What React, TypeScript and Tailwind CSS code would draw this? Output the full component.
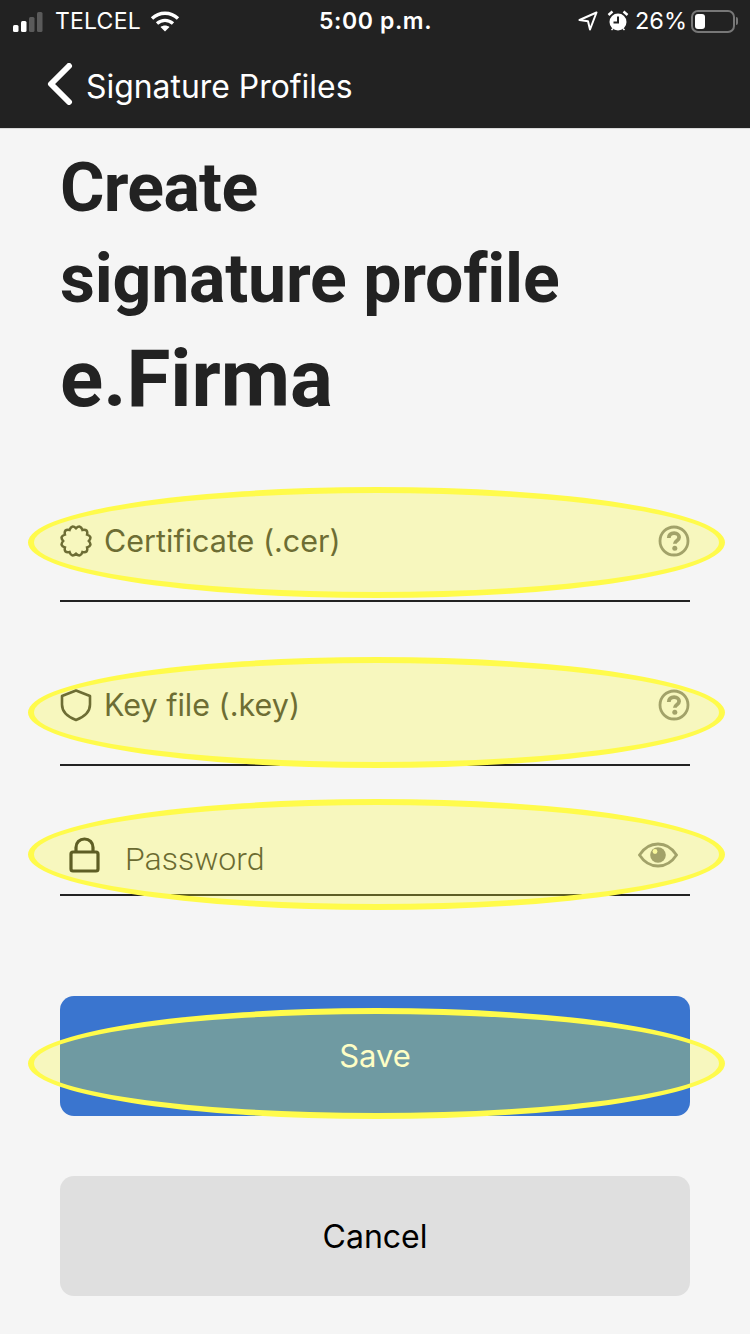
import React from 'react';

const sans = 'font-["Inter","Liberation_Sans",sans-serif]';

// Scalloped outline for the certificate badge
const badgePath = (() => {
  const n = 12;
  let d = '';
  for (let i = 0; i < n; i++) {
    const a0 = (i / n) * Math.PI * 2;
    const a1 = ((i + 1) / n) * Math.PI * 2;
    const am = (a0 + a1) / 2;
    const p = (a: number, r: number) => `${(12 + r * Math.cos(a)).toFixed(2)} ${(12 + r * Math.sin(a)).toFixed(2)}`;
    if (i === 0) d += `M${p(a0, 9.6)}`;
    d += `Q${p(am, 13)} ${p(a1, 9.6)}`;
  }
  return d + 'Z';
})();

const Question = () => (
  <svg width="32" height="32" viewBox="0 0 32 32" fill="none" className="shrink-0">
    <circle cx="16" cy="16" r="14" stroke="#808080" strokeWidth="2.800" />
    <path d="M10.800 13c.2-3.100 2.400-4.800 5.300-4.800 3 0 5 1.700 5 4.100 0 3.500-4.300 3.300-4.300 6.500" stroke="#808080" strokeWidth="3.800" fill="none" />
    <circle cx="16.800" cy="23.200" r="2.500" fill="#808080" />
  </svg>
);

const Ellipse = ({ className }: { className: string }) => (
  <div className={`absolute left-[-32px] w-[697px] h-[111px] rounded-[50%] border-[6px] border-[#fffb4b] bg-[#fcfa2d]/28 pointer-events-none ${className}`} />
);

const FileRow = ({ label, icon, className, ellipse }: { label: string; icon: React.ReactNode; className: string; ellipse: string }) => (
  <div className={`relative flex items-center justify-between border-b-2 border-[#222] pb-[10px] ${className}`}>
    <div className="flex items-center gap-[12px]">
      {icon}
      <span className={`${sans} text-[30.500px] leading-[36px] text-[#363636]`}>{label}</span>
    </div>
    <Question />
    <Ellipse className={ellipse} />
  </div>
);

export default function App() {
  return (
    <div className="w-[750px] h-[1334px] bg-[#f5f5f5] overflow-hidden">
      <div className="h-[129px] bg-[#222] border-b border-[#d9d9d9] text-white">
        <div className={`${sans} relative h-[42px] flex items-center justify-between text-[23px]`}>
          <div className="flex items-center pl-[13px]">
            <svg width="34" height="20" viewBox="0 0 34 20" className="mt-[1px]">
              <rect x="0" y="13" width="5.500" height="7" rx="1.500" fill="#fff" />
              <rect x="8" y="9" width="5.500" height="11" rx="1.500" fill="#fff" />
              <rect x="16" y="5" width="5.500" height="15" rx="1.500" fill="#5a5a5a" />
              <rect x="24" y="0" width="5.500" height="20" rx="1.500" fill="#5a5a5a" />
            </svg>
            <span className="ml-[8px] tracking-[0.2px]">TELCEL</span>
            <svg width="30" height="22" viewBox="0 0 30 22" className="ml-[9px]" fill="none" stroke="#fff" strokeWidth="3.400">
              <path d="M2 8.500C9.500 1.500 20.500 1.500 28 8.500" />
              <path d="M7 13.500c4.800-4.200 11.200-4.200 16 0" />
              <path d="M15 21.500l-4.500-4.600c2.700-2 6.300-2 9 0z" fill="#fff" stroke="none" />
            </svg>
          </div>
          <span className="absolute left-[319px] font-semibold tracking-[0.6px] text-[23px]">5:00 p.m.</span>
          <div className="flex items-center pr-[12px]">
            <svg width="20" height="20" viewBox="0 0 20 20" fill="none" stroke="#fff" strokeWidth="2">
              <path d="M18.500 1.500 1.500 9l8.500 1.200L12 18.500z" strokeLinejoin="round" />
            </svg>
            <svg width="22" height="22" viewBox="0 0 22 22" className="ml-[9px]">
              <circle cx="11" cy="12" r="8.500" fill="#fff" />
              <path d="M11 6.500V12.500H6.500" stroke="#222" strokeWidth="2" fill="none" />
              <path d="M1.500 5 5.500 1.500M20.500 5 16.500 1.500" stroke="#fff" strokeWidth="2.500" />
              <path d="M4.500 20l1.500-1.500M17.500 20 16 18.500" stroke="#fff" strokeWidth="1.500" />
            </svg>
            <span className="ml-[6px] text-[23.500px]">26%</span>
            <div className="ml-[4px] w-[44px] h-[23px] rounded-[7px] border-2 border-[#777] p-[2px] flex">
              <div className="w-[10px] rounded-[3px] bg-white" />
            </div>
            <div className="ml-[1px] w-[2px] h-[8px] rounded-r-sm bg-[#777]" />
          </div>
        </div>
        <div className="flex items-center h-[86px] pl-[47px]">
          <svg width="26" height="42" viewBox="0 0 26 42" fill="none" stroke="#fff" strokeWidth="6" strokeLinecap="round" strokeLinejoin="round" className="mt-[-2px]">
            <path d="M22 3 4 21l18 18" />
          </svg>
          <span className={`${sans} ml-[13px] mt-[3px] text-[31.900px] leading-[40px]`}>Signature Profiles</span>
        </div>
      </div>

      <div className="px-[60px]">
        <h1 className="font-['Roboto',sans-serif] font-bold text-[#222] text-[68px] leading-[91px] mt-[14px] tracking-[-0.2px]">
          <span className="tracking-[-0.7px]">Create</span><br />signature profile
        </h1>
        <div className="font-['Roboto',sans-serif] font-bold text-[#222] text-[80px] leading-[110px] mt-[-1px]">e.Firma</div>

        <FileRow
          label="Certificate (.cer)"
          className="mt-[58px] h-[110px]"
          ellipse="top-[-5px]"
          icon={
            <svg width="32" height="32" viewBox="0 0 24 24" fill="none" stroke="#363636" strokeWidth="1.900" className="shrink-0">
              <path d={badgePath} />
            </svg>
          }
        />
        <FileRow
          label="Key file (.key)"
          className="mt-[54px] h-[110px]"
          ellipse="top-[1px]"
          icon={
            <svg width="32" height="34" viewBox="0 0 32 34" fill="none" stroke="#363636" strokeWidth="2.600" className="shrink-0">
              <path d="M16 2.500 30 8v8.500C30 24 24 29 16 32 8 29 2 24 2 16.500V8z" strokeLinejoin="round" />
            </svg>
          }
        />
        <div className="relative mt-[20px] h-[110px] flex items-center border-b-2 border-[#222]">
          <svg width="32" height="36" viewBox="0 0 32 36" fill="none" stroke="#222" strokeWidth="3.200" className="ml-[9px] mt-[30px] shrink-0">
            <rect x="2" y="15" width="27" height="19" rx="2" />
            <path d="M7 15V10.500C7 5.500 10.500 2 15.500 2S24 5.500 24 10.500V15" />
          </svg>
          <span className="font-['Roboto',sans-serif] font-light text-[32px] leading-[40px] text-[#333] ml-[24px] mt-[38px]">Password</span>
          <svg width="40" height="26" viewBox="0 0 40 26" fill="none" className="ml-auto mr-[12px] mt-[30px]">
            <path d="M1.500 13C6 6 12.500 2 20 2s14 4 18.500 11C34 20 27.500 24 20 24S6 20 1.500 13z" stroke="#808080" strokeWidth="2.800" />
            <circle cx="20" cy="13" r="7.800" fill="#808080" />
            <circle cx="17" cy="9.500" r="2.400" fill="#f6f5c5" />
          </svg>
          <Ellipse className="top-[13px]" />
        </div>

        <div className={`${sans} relative mt-[100px] h-[120px] rounded-[14px] bg-[#3a75cf] flex items-center justify-center text-white text-[31px]`}>
          Save
          <Ellipse className="top-[12px]" />
        </div>
        <div className={`${sans} mt-[60px] h-[120px] pt-[2px] rounded-[14px] bg-[#dfdfdf] flex items-center justify-center text-black text-[32px]`}>
          Cancel
        </div>
      </div>
    </div>
  );
}
